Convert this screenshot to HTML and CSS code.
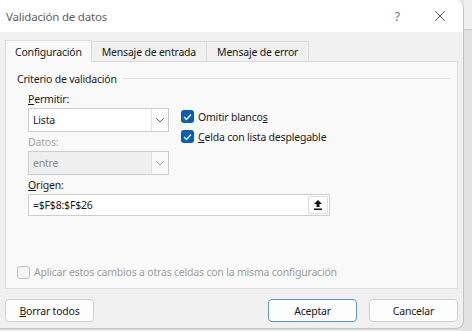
FILE: index.html
```html
<!DOCTYPE html>
<html lang="es">
<head>
    <meta charset="UTF-8">
    <meta name="viewport" content="width=device-width, initial-scale=1.0">
    <title>Validación de datos</title>
    <link rel="stylesheet" href="styles.css">
</head>
<body>
    <div class="dialog">
        <!-- Title bar -->
        <div class="title-bar">
            <span class="title">Validación de datos</span>
            <span class="title-btn help">?</span>
            <span class="title-btn close">
                <svg width="12" height="12" viewBox="0 0 12 12"><path d="M1 1 L11 11 M11 1 L1 11" stroke="#666" stroke-width="1"/></svg>
            </span>
        </div>

        <!-- Tabs -->
        <div class="tabs">
            <div class="tab active">Configuración</div>
            <div class="tab">Mensaje de entrada</div>
            <div class="tab">Mensaje de error</div>
        </div>

        <!-- Tab panel -->
        <div class="panel">
            <div class="group-title">
                <span>Criterio de validación</span>
                <span class="group-line"></span>
            </div>

            <div class="criteria">
                <div class="top-row">
                    <div class="left-col">
                        <div class="label"><u>P</u>ermitir:</div>
                        <div class="select">
                            <span class="select-value">Lista</span>
                            <span class="select-arrow">
                                <svg width="10" height="6" viewBox="0 0 10 6"><path d="M1 1 L5 5 L9 1" fill="none" stroke="#666" stroke-width="1"/></svg>
                            </span>
                        </div>
                        <div class="label disabled">Datos:</div>
                        <div class="select is-disabled">
                            <span class="select-value">entre</span>
                            <span class="select-arrow">
                                <svg width="10" height="6" viewBox="0 0 10 6"><path d="M1 1 L5 5 L9 1" fill="none" stroke="#a0a0a0" stroke-width="1"/></svg>
                            </span>
                        </div>
                    </div>
                    <div class="right-col">
                        <div class="check-row">
                            <span class="checkbox checked">
                                <svg width="9" height="8" viewBox="0 0 9 8"><path d="M1 4 L3.5 6.5 L8 1.5" fill="none" stroke="#fff" stroke-width="1.3"/></svg>
                            </span>
                            <span>Omitir blanco<u>s</u></span>
                        </div>
                        <div class="check-row">
                            <span class="checkbox checked">
                                <svg width="9" height="8" viewBox="0 0 9 8"><path d="M1 4 L3.5 6.5 L8 1.5" fill="none" stroke="#fff" stroke-width="1.3"/></svg>
                            </span>
                            <span><u>C</u>elda con lista desplegable</span>
                        </div>
                    </div>
                </div>

                <div class="label source-label"><u>O</u>rigen:</div>
                <div class="source">
                    <span class="source-value">=$F$8:$F$26</span>
                    <span class="source-btn">
                        <svg width="10" height="12" viewBox="0 0 10 12"><path d="M5 1 L1 5 H3.5 V8 H6.5 V5 H9 Z" fill="#111"/><rect x="1" y="9.5" width="8" height="1.5" fill="#111"/></svg>
                    </span>
                </div>
            </div>

            <div class="apply-row">
                <span class="checkbox empty"></span>
                <span>Aplicar estos cambios a otras celdas con la misma configuración</span>
            </div>
        </div>

        <!-- Bottom buttons -->
        <div class="buttons">
            <button class="btn"><u>B</u>orrar todos</button>
            <div class="spacer"></div>
            <button class="btn primary">Aceptar</button>
            <button class="btn">Cancelar</button>
        </div>
    </div>
    <div class="backdrop"></div>
</body>
</html>
```

FILE: styles.css
```css
/* Basic reset */
* {
    margin: 0;
    padding: 0;
    box-sizing: border-box;
}

html, body {
    height: 100%;
    overflow: hidden;
}

body {
    display: flex;
    background: #e4e4e4;
    font-family: "Segoe UI", "Noto Sans", sans-serif;
    font-size: 10.5px;
    letter-spacing: -0.2px;
    color: #1b1b1b;
}

/* Dialog window */
.dialog {
    width: 464px;
    height: 329px;
    background: #f0f0f0;
    border-right: 1px solid #c4c4c4;
    border-bottom: 1px solid #c4c4c4;
    border-radius: 0 8px 8px 0;
    overflow: hidden;
    display: flex;
    flex-direction: column;
    flex-shrink: 0;
}

/* Strip of the sheet behind the dialog */
.backdrop {
    flex: 1;
    background: linear-gradient(#efefef 0 29px, #c8c8c8 29px 30px, #e2e2e2 30px);
}

/* Title bar */
.title-bar {
    height: 32px;
    background: #fff;
    display: flex;
    align-items: center;
    padding-left: 6px;
}

.title {
    flex: 1;
    font-size: 11.5px;
    color: #5e5e5e;
}

.title-btn {
    color: #777;
    font-size: 13px;
    display: flex;
    align-items: center;
}

.help {
    margin-right: 34px;
}

.close {
    margin-right: 17px;
}

/* Tabs */
.tabs {
    display: flex;
    align-items: flex-end;
    margin-top: 7px;
    padding-left: 5px;
    height: 22px;
}

.tab {
    height: 20px;
    padding: 0 10px;
    display: flex;
    align-items: center;
    background: #f0f0f0;
    border: 1px solid #dcdcdc;
    border-bottom: none;
    border-left: none;
}

.tab.active {
    height: 22px;
    background: #f9f9f9;
    border-left: 1px solid #dcdcdc;
    margin-bottom: -1px;
    position: relative;
    padding: 0 9px;
}

/* Tab panel */
.panel {
    margin: 0 5px;
    height: 228px;
    background: #f9f9f9;
    border: 1px solid #dcdcdc;
    display: flex;
    flex-direction: column;
    padding-left: 11px;
}

.group-title {
    display: flex;
    align-items: center;
    margin-top: 9px;
    height: 15px;
    padding-right: 7px;
}

.group-line {
    flex: 1;
    height: 1px;
    background: #e2e2e2;
    margin-left: 6px;
}

.criteria {
    padding-left: 11px;
}

.top-row {
    display: flex;
}

.left-col {
    width: 141px;
}

.label {
    height: 15px;
    line-height: 15px;
    margin-top: 6px;
    margin-bottom: 1px;
}

.label.disabled {
    color: #a3a3a3;
    margin-top: 3px;
}

.label.source-label {
    margin-top: 3px;
}

/* Dropdowns */
.select {
    height: 24px;
    border: 1px solid #cdcdcd;
    background: #fff;
    display: flex;
}

.select-value {
    flex: 1;
    display: flex;
    align-items: center;
    padding-left: 4px;
}

.select-arrow {
    width: 17px;
    border-left: 1px solid #e4e4e4;
    display: flex;
    align-items: center;
    justify-content: center;
}

.select.is-disabled {
    background: #efefef;
    color: #8a8a8a;
}

.select.is-disabled .select-arrow {
    background: #f9f9f9;
    border-left-color: #e0e0e0;
}

/* Checkboxes */
.right-col {
    margin-left: 12px;
    margin-top: 24px;
    display: flex;
    flex-direction: column;
    gap: 7px;
}

.check-row {
    display: flex;
    align-items: center;
    gap: 4px;
    height: 13px;
}

.checkbox {
    width: 13px;
    height: 13px;
    border-radius: 3px;
    display: flex;
    align-items: center;
    justify-content: center;
}

.checkbox.checked {
    background: #005fb8;
}

.checkbox.empty {
    border: 1px solid #c3c3c3;
    background: #f6f6f6;
}

/* Source field */
.source {
    width: 302px;
    height: 22px;
    border: 1px solid #cdcdcd;
    background: #fff;
    display: flex;
}

.source-value {
    flex: 1;
    display: flex;
    align-items: center;
    padding-left: 4px;
}

.source-btn {
    width: 20px;
    margin: 1px;
    border: 1px solid #dedede;
    background: #fcfcfc;
    display: flex;
    align-items: center;
    justify-content: center;
}

.apply-row {
    margin-top: auto;
    margin-bottom: 9px;
    display: flex;
    align-items: center;
    gap: 4px;
    color: #9c9c9c;
}

/* Buttons */
.buttons {
    display: flex;
    padding: 10px 5px 0;
    gap: 12px;
}

.spacer {
    flex: 1;
}

.btn {
    width: 89px;
    height: 23px;
    border: 1px solid #d0d0d0;
    border-radius: 4px;
    background: #fdfdfd;
    font-family: inherit;
    font-size: 10.5px;
    letter-spacing: -0.2px;
    color: #1b1b1b;
}

.btn.primary {
    border-color: #5b95d6;
}
```
